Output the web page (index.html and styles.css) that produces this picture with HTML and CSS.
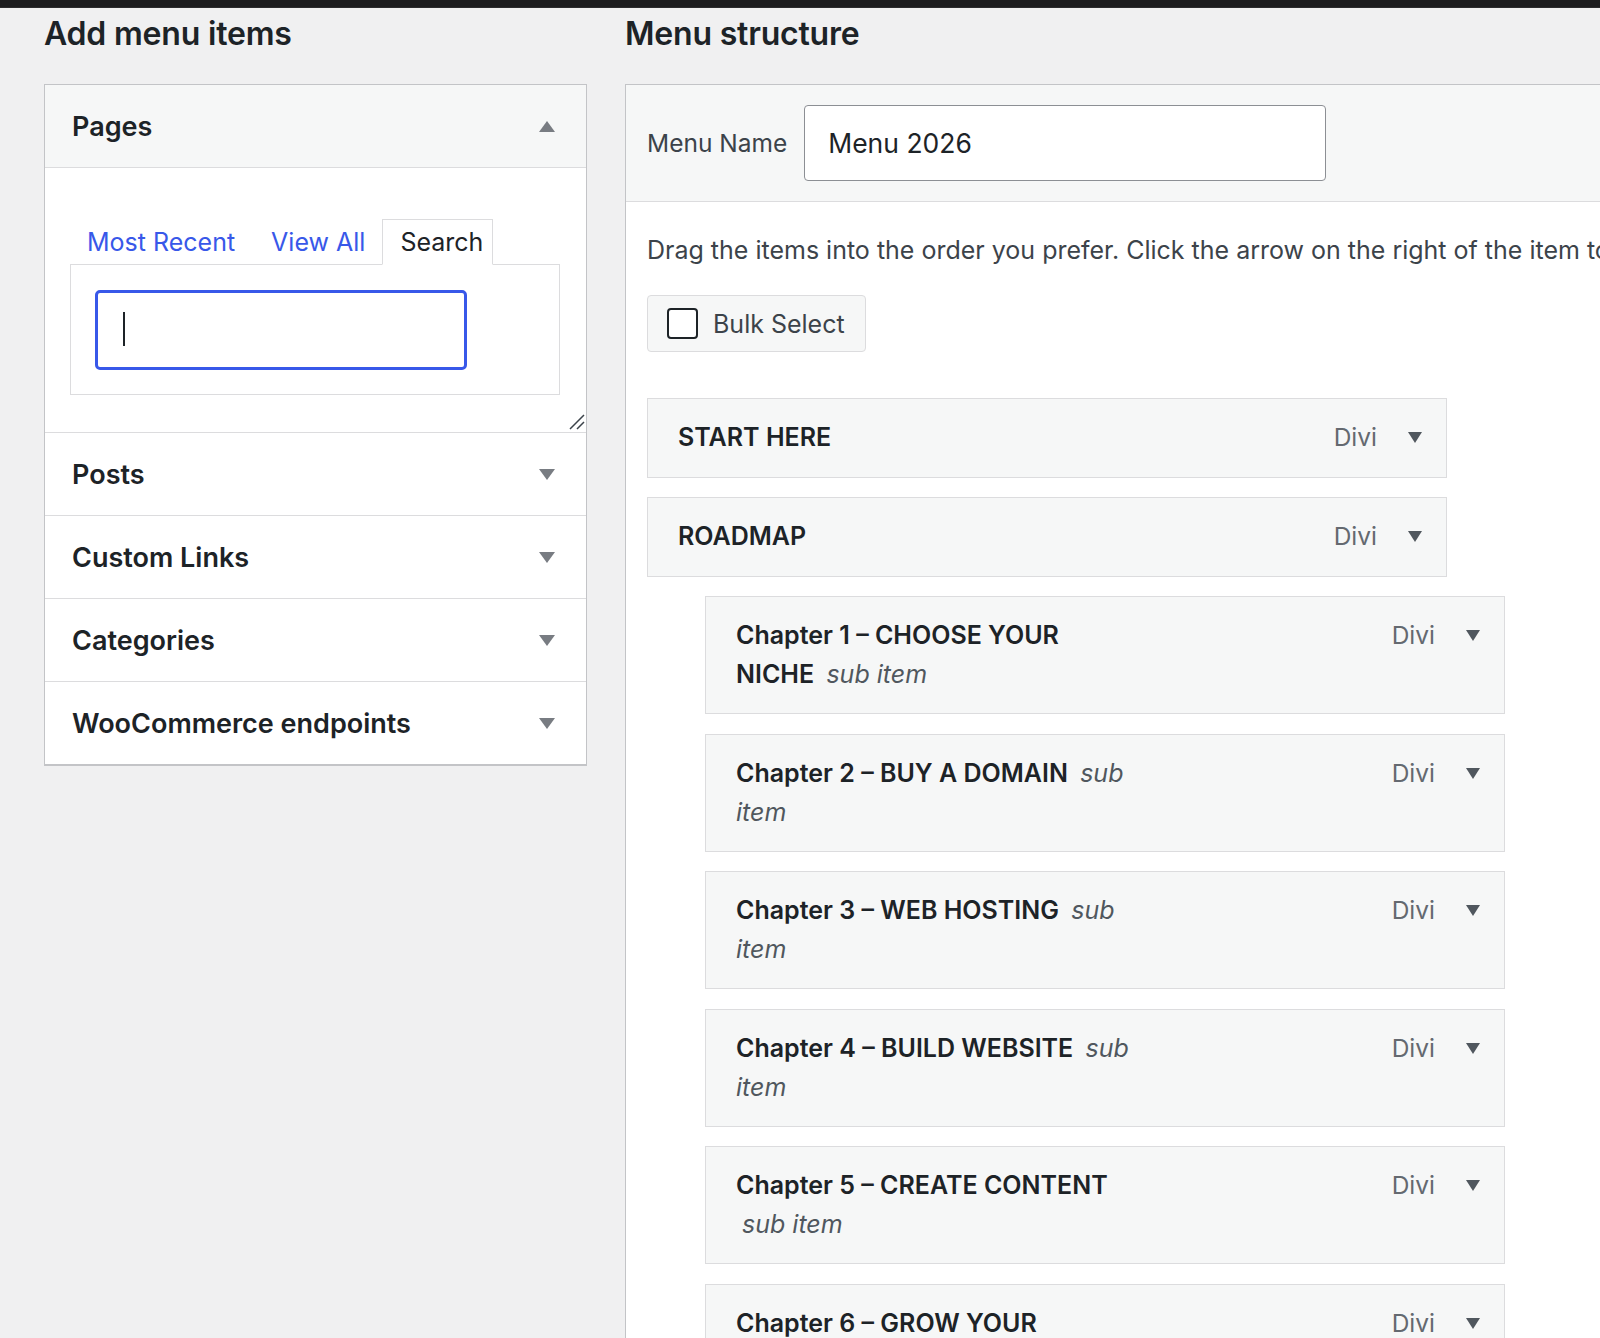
FILE: index.html
```html
<!DOCTYPE html>
<html lang="en">
<head>
<meta charset="utf-8">
<title>Menus</title>
<link rel="stylesheet" href="styles.css">
</head>
<body>
<div class="adminbar"></div>
<div class="wrap">
  <!-- Left column: sources of new menu items -->
  <div class="col-left">
    <h2 class="col-title">Add menu items</h2>
    <div class="accordion">
      <div class="acc-section open">
        <h3 class="acc-title">Pages
          <svg class="acc-arrow" viewBox="0 0 16 11"><path d="M8 0 16 11H0z"/></svg>
        </h3>
        <div class="acc-content">
          <ul class="tabs">
            <li class="tab tab-link">Most Recent</li>
            <li class="tab tab-link">View All</li>
            <li class="tab tab-active">Search</li>
          </ul>
          <div class="tab-panel">
            <div class="search-input"><span class="caret"></span></div>
          </div>
          <svg class="resize-handle" viewBox="0 0 16 16"><path d="M15 1 1 15M15 8 8 15"/></svg>
        </div>
      </div>
      <div class="acc-section">
        <h3 class="acc-title">Posts
          <svg class="acc-arrow" viewBox="0 0 16 11"><path d="M0 0h16L8 11z"/></svg>
        </h3>
      </div>
      <div class="acc-section">
        <h3 class="acc-title">Custom Links
          <svg class="acc-arrow" viewBox="0 0 16 11"><path d="M0 0h16L8 11z"/></svg>
        </h3>
      </div>
      <div class="acc-section">
        <h3 class="acc-title">Categories
          <svg class="acc-arrow" viewBox="0 0 16 11"><path d="M0 0h16L8 11z"/></svg>
        </h3>
      </div>
      <div class="acc-section">
        <h3 class="acc-title">WooCommerce endpoints
          <svg class="acc-arrow" viewBox="0 0 16 11"><path d="M0 0h16L8 11z"/></svg>
        </h3>
      </div>
    </div>
  </div>

  <!-- Right column: the menu being edited -->
  <div class="col-right">
    <h2 class="col-title">Menu structure</h2>
    <div class="menu-box">
      <div class="menu-header">
        <label class="menu-name-label">Menu Name</label>
        <div class="menu-name-input">Menu 2026</div>
      </div>
      <div class="menu-body">
        <p class="drag-hint">Drag the items into the order you prefer. Click the arrow on the right of the item to reveal additional configuration options.</p>
        <div class="bulk-select"><span class="checkbox"></span>Bulk Select</div>
        <ul class="menu-items">
          <li class="menu-item">
            <div class="item-title">START HERE</div>
            <div class="item-controls"><span class="item-type">Divi</span><svg class="item-arrow" viewBox="0 0 14 11"><path d="M0 0h14L7 11z"/></svg></div>
          </li>
          <li class="menu-item">
            <div class="item-title">ROADMAP</div>
            <div class="item-controls"><span class="item-type">Divi</span><svg class="item-arrow" viewBox="0 0 14 11"><path d="M0 0h14L7 11z"/></svg></div>
          </li>
          <li class="menu-item depth-1">
            <div class="item-title">Chapter 1 – CHOOSE YOUR NICHE <span class="is-sub">sub item</span></div>
            <div class="item-controls"><span class="item-type">Divi</span><svg class="item-arrow" viewBox="0 0 14 11"><path d="M0 0h14L7 11z"/></svg></div>
          </li>
          <li class="menu-item depth-1">
            <div class="item-title">Chapter 2 – BUY A DOMAIN <span class="is-sub">sub item</span></div>
            <div class="item-controls"><span class="item-type">Divi</span><svg class="item-arrow" viewBox="0 0 14 11"><path d="M0 0h14L7 11z"/></svg></div>
          </li>
          <li class="menu-item depth-1">
            <div class="item-title">Chapter 3 – WEB HOSTING <span class="is-sub">sub item</span></div>
            <div class="item-controls"><span class="item-type">Divi</span><svg class="item-arrow" viewBox="0 0 14 11"><path d="M0 0h14L7 11z"/></svg></div>
          </li>
          <li class="menu-item depth-1">
            <div class="item-title">Chapter 4 – BUILD WEBSITE <span class="is-sub">sub item</span></div>
            <div class="item-controls"><span class="item-type">Divi</span><svg class="item-arrow" viewBox="0 0 14 11"><path d="M0 0h14L7 11z"/></svg></div>
          </li>
          <li class="menu-item depth-1">
            <div class="item-title">Chapter 5 – CREATE CONTENT <span class="is-sub">sub item</span></div>
            <div class="item-controls"><span class="item-type">Divi</span><svg class="item-arrow" viewBox="0 0 14 11"><path d="M0 0h14L7 11z"/></svg></div>
          </li>
          <li class="menu-item depth-1">
            <div class="item-title">Chapter 6 – GROW YOUR AUDIENCE <span class="is-sub">sub item</span></div>
            <div class="item-controls"><span class="item-type">Divi</span><svg class="item-arrow" viewBox="0 0 14 11"><path d="M0 0h14L7 11z"/></svg></div>
          </li>
        </ul>
      </div>
    </div>
  </div>
</div>
</body>
</html>
```

FILE: styles.css
```css
* { box-sizing: border-box; }

html, body { margin: 0; padding: 0; }

body {
  width: 1600px;
  height: 1338px;
  overflow: hidden;
  background: #f0f0f1;
  color: #1d2327;
  font-family: Inter, "Noto Sans", "Liberation Sans", sans-serif;
  font-size: 25px;
}

ul { list-style: none; margin: 0; padding: 0; }

.adminbar {
  height: 8px;
  background: #1d1d1f;
  border-bottom: 1px solid #2c2c2e;
}

.wrap {
  display: flex;
  gap: 38px;
  padding-left: 44px;
}

.col-left { flex: none; width: 543px; }
.col-right { flex: none; width: 1100px; }

.col-title {
  margin: 6px 0 30px;
  font-size: 32px;
  line-height: 40px;
  font-weight: 600;
  letter-spacing: -0.2px;
}

/* Accordion of item sources */
.accordion {
  background: #fff;
  border: 1px solid #c3c4c7;
  border-bottom-width: 2px;
}

.acc-section { border-bottom: 1px solid #dcdcde; }
.acc-section:last-child { border-bottom: 0; }

.acc-title {
  display: flex;
  align-items: center;
  justify-content: space-between;
  height: 82px;
  margin: 0;
  padding: 0 31px 0 27px;
  font-size: 27px;
  font-weight: 600;
}

.open .acc-title {
  height: 83px;
  background: #f6f7f7;
  border-bottom: 1px solid #dcdcde;
}

.acc-arrow { width: 16px; height: 11px; fill: #787c82; }

.acc-content {
  position: relative;
  height: 264px;
  padding: 51px 26px 0 25px;
}

.tabs {
  display: flex;
  align-items: flex-end;
  height: 46px;
  margin-bottom: -1px;
}

.tab {
  height: 46px;
  line-height: 46px;
  padding: 0 17px;
}

.tab-link { color: #3858e9; }
.tab-link + .tab-link { margin-left: 2px; }

.tab-active {
  padding: 0 9px 0 17px;
  background: #fff;
  border: 1px solid #dcdcde;
  border-bottom-color: #fff;
  line-height: 44px;
  position: relative;
  z-index: 1;
  color: #1d2327;
}

.tab-panel {
  height: 131px;
  padding: 25px 24px 0;
  border: 1px solid #dcdcde;
}

.search-input {
  width: 372px;
  height: 80px;
  border: 3px solid #3858e9;
  border-radius: 5px;
  background: #fff;
  padding: 19px 0 0 25px;
}

.caret {
  display: block;
  width: 2px;
  height: 34px;
  background: #1d2327;
}

.resize-handle {
  position: absolute;
  right: 1px;
  bottom: 2px;
  width: 16px;
  height: 16px;
  stroke: #3c434a;
  stroke-width: 1.5;
  fill: none;
}

/* Menu structure box */
.menu-box {
  background: #fff;
  border: 1px solid #c3c4c7;
  border-right: 0;
  min-height: 1300px;
}

.menu-header {
  display: flex;
  align-items: center;
  gap: 17px;
  padding: 20px 21px;
  background: #f6f7f7;
  border-bottom: 1px solid #dcdcde;
}

.menu-name-label { color: #3c434a; font-size: 24.5px; }

.menu-name-input {
  width: 522px;
  height: 76px;
  padding-left: 23px;
  line-height: 74px;
  font-size: 26.5px;
  color: #1d2327;
  background: #fff;
  border: 1px solid #8c8f94;
  border-radius: 4px;
}

.menu-body { padding: 0 21px; }

.drag-hint {
  margin: 30px 0 27px;
  white-space: nowrap;
  line-height: 36px;
  color: #3c434a;
}

.bulk-select {
  display: inline-flex;
  align-items: center;
  gap: 15px;
  height: 57px;
  padding: 0 20px 0 19px;
  background: #f6f7f7;
  border: 1px solid #dcdcde;
  border-radius: 4px;
  color: #3c434a;
}

.checkbox {
  width: 31px;
  height: 31px;
  background: #fff;
  border: 2px solid #1d2327;
  border-radius: 4px;
}

.menu-items { margin-top: 46px; }

.menu-item {
  display: flex;
  width: 800px;
  margin-bottom: 19px;
  padding: 19px 24px 20px 30px;
  background: #f6f7f7;
  border: 1px solid #dcdcde;
  line-height: 39px;
}

.depth-1 {
  margin-left: 58px;
  margin-bottom: 19.5px;
  padding-bottom: 19px;
}

.item-title {
  width: 398px;
  font-weight: 600;
}

.is-sub {
  margin-left: 6px;
  font-style: italic;
  font-weight: 400;
  color: #50575e;
}

.item-controls {
  display: flex;
  align-items: flex-start;
  margin-left: auto;
}

.item-type { color: #646970; font-size: 24.5px; }

.item-arrow {
  width: 14px;
  height: 11px;
  margin: 14px 0 0 31px;
  fill: #50575e;
}
```
